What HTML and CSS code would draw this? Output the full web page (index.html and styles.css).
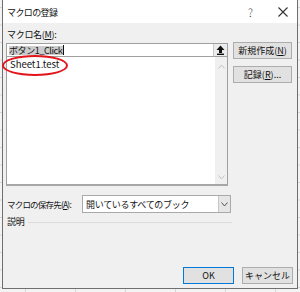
FILE: index.html
```html
<!DOCTYPE html>
<html lang="ja">
<head>
<meta charset="utf-8"/>
<title>マクロの登録</title>
<link rel="stylesheet" href="styles.css">
</head>
<body>
<div class="desk">
  <div class="dialog">
    <div class="titlebar">
      <span class="title">マクロの登録</span>
      <span class="help">?</span>
      <svg class="close" width="10" height="10" viewBox="0 0 10 10">
        <path d="M0.5 0.5 L9.5 9.5 M9.5 0.5 L0.5 9.5" stroke="#333" stroke-width="1.1"/>
      </svg>
    </div>

    <div class="label name-label">マクロ名(<u>M</u>):</div>
    <div class="top">
      <div class="main">
        <div class="input">
          <span class="sel">ボタン1_Click</span><span class="caret"></span>
          <span class="pick">
            <svg width="9" height="10" viewBox="0 0 9 10">
              <path d="M4.5 0.5 L8.5 5 L6 5 L6 8 L3 8 L3 5 L0.5 5 Z" fill="#111"/>
              <rect x="1" y="8.6" width="7" height="1.4" fill="#111"/>
            </svg>
          </span>
        </div>
        <div class="list">
          <div class="item">Sheet1.test</div>
          <div class="scroll">
            <svg width="7" height="5" viewBox="0 0 7 5"><path d="M0.5 4.5 L3.5 1 L6.5 4.5" fill="none" stroke="#c2c2c2" stroke-width="1"/></svg>
            <svg width="7" height="5" viewBox="0 0 7 5"><path d="M0.5 0.5 L3.5 4 L6.5 0.5" fill="none" stroke="#c2c2c2" stroke-width="1"/></svg>
          </div>
        </div>
      </div>
      <div class="side">
        <button class="btn">新規作成(<u>N</u>)</button>
        <button class="btn">記録(<u>R</u>)...</button>
      </div>
    </div>

    <div class="store">
      <span class="label store-label">マクロの保存先(<u>A</u>):</span>
      <div class="select">
        <span class="value">開いているすべてのブック</span>
        <span class="drop">
          <svg width="7" height="5" viewBox="0 0 7 5"><path d="M0.5 0.5 L3.5 4 L6.5 0.5" fill="none" stroke="#555" stroke-width="1"/></svg>
        </span>
      </div>
    </div>

    <div class="desc">
      <span class="label">説明</span>
      <span class="rule"></span>
    </div>

    <div class="actions">
      <button class="btn ok">OK</button>
      <button class="btn">キャンセル</button>
    </div>
  </div>
  <div class="circle"></div>
</div>
</body>
</html>
```

FILE: styles.css
```css
* {
  box-sizing: border-box;
}

body {
  margin: 0;
  font-family: "Noto Sans CJK JP", "Noto Sans", sans-serif;
  font-size: 9px;
  color: #111;
}

u {
  text-decoration: underline;
}

.desk {
  position: relative;
  width: 300px;
  height: 292px;
  padding-left: 2px;
  background-color: #f3f3f3;
  background-image:
    linear-gradient(to right, #d6d6d6 1px, transparent 1px),
    linear-gradient(to bottom, #d6d6d6 1px, transparent 1px);
  background-size: 50px 17.5px;
  background-position: 25px 7px;
}

.dialog {
  width: 296px;
  height: 289px;
  background: #f0f0f0;
  border: 1px solid #6f6f6f;
  border-top: none;
  display: flex;
  flex-direction: column;
}

.titlebar {
  height: 23px;
  background: #fff;
  display: flex;
  align-items: center;
  padding-left: 4px;
  flex-shrink: 0;
}

.title {
  flex: 1;
  font-size: 9px;
  letter-spacing: -0.6px;
  margin-top: 1px;
}

.help {
  font-size: 11px;
  font-weight: 300;
  color: #333;
  margin-right: 25px;
}

.close {
  margin-right: 9px;
}

.label {
  line-height: 12px;
  white-space: nowrap;
  letter-spacing: -0.3px;
}

.name-label {
  margin: 6px 0 0 4px;
  height: 13px;
}

.top {
  display: flex;
  gap: 5px;
  padding-left: 3px;
}

.main {
  width: 222px;
  padding-top: 1px;
}

.input {
  height: 14px;
  background: #fff;
  border: 1px solid #a0a0a0;
  display: flex;
  align-items: center;
  padding-left: 2px;
}

.sel {
  background: #cccccc;
  line-height: 9px;
  padding-right: 1px;
  letter-spacing: -0.4px;
}

.caret {
  width: 1px;
  height: 10px;
  background: #111;
}

.pick {
  margin-left: auto;
  width: 14px;
  height: 12px;
  background: #ececec;
  border-left: 1px solid #c8c8c8;
  display: flex;
  align-items: center;
  justify-content: center;
}

.list {
  height: 130px;
  margin-top: -1px;
  background: #fff;
  border: 1px solid #a0a0a0;
  border-bottom: 2px solid #a7a7a7;
  display: flex;
}

.item {
  flex: 1;
  padding: 1px 0 0 3px;
  font-size: 9.5px;
  line-height: 12px;
}

.scroll {
  width: 12px;
  background: #f0f0f0;
  display: flex;
  flex-direction: column;
  align-items: center;
  justify-content: space-between;
  padding: 7px 0 4px;
}

.side {
  width: 59px;
  display: flex;
  flex-direction: column;
  gap: 7px;
}

.btn {
  height: 17px;
  width: 59px;
  padding: 0;
  font-family: inherit;
  font-size: 9px;
  color: #111;
  background: #e1e1e1;
  border: 1px solid #adadad;
}

.store {
  display: flex;
  align-items: center;
  margin-top: 9px;
  padding-left: 4px;
}

.store-label {
  width: 75px;
  flex-shrink: 0;
  font-size: 8.5px;
  letter-spacing: -0.8px;
}

.select {
  width: 149px;
  height: 18px;
  background: #fff;
  border: 1px solid #a9a9a9;
  display: flex;
  align-items: center;
  padding-left: 3px;
}

.value {
  flex: 1;
  letter-spacing: -0.3px;
}

.drop {
  width: 12px;
  height: 16px;
  background: #e6e6e6;
  border-left: 1px solid #c6c6c6;
  display: flex;
  align-items: center;
  justify-content: center;
}

.desc {
  display: flex;
  align-items: center;
  gap: 4px;
  margin-top: 3px;
  padding-left: 4px;
  width: 229px;
}

.rule {
  flex: 1;
  height: 1px;
  background: #dcdcdc;
}

.actions {
  margin-top: auto;
  display: flex;
  justify-content: flex-end;
  gap: 8px;
  padding: 0 4px 4px 0;
}

.actions .btn {
  width: 51px;
}

.ok {
  border-color: #0078d7;
}

.circle {
  position: absolute;
  left: 2px;
  top: 55px;
  width: 66px;
  height: 21px;
  border: 2.5px solid #e2151b;
  border-radius: 50%;
}
```
